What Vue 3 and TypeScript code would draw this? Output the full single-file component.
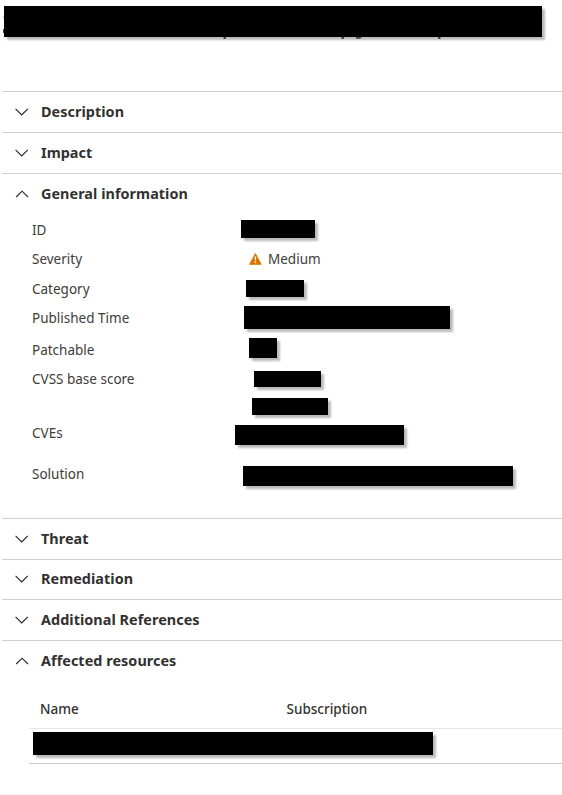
<script setup lang="ts">
interface Bar { w: number; h: number; x: number; y: number }
interface Field { label: string; height: number; bars: Bar[]; severity?: string }

const fields: Field[] = [
  { label: 'ID', height: 29, bars: [{ x: 241, y: 2, w: 74, h: 18 }] },
  { label: 'Severity', height: 30, bars: [], severity: 'Medium' },
  { label: 'Category', height: 29, bars: [{ x: 246, y: 3, w: 58, h: 17 }] },
  { label: 'Published Time', height: 32, bars: [{ x: 244, y: 0, w: 206, h: 23 }] },
  { label: 'Patchable', height: 29, bars: [{ x: 249, y: 0, w: 28, h: 20 }] },
  { label: 'CVSS base score', height: 54, bars: [{ x: 254, y: 4, w: 67, h: 16 }, { x: 252, y: 11, w: 76, h: 17 }] },
  { label: 'CVEs', height: 41, bars: [{ x: 235, y: 4, w: 169, h: 20 }] },
  { label: 'Solution', height: 54, bars: [{ x: 243, y: 4, w: 270, h: 20 }] },
]

const sections = [
  { title: 'Description', open: false, cls: '' },
  { title: 'Impact', open: false, cls: '' },
  { title: 'General information', open: true, cls: 'general' },
  { title: 'Threat', open: false, cls: '' },
  { title: 'Remediation', open: false, cls: 'short' },
  { title: 'Additional References', open: false, cls: '' },
  { title: 'Affected resources', open: true, cls: 'resources' },
]
</script>

<template>
  <main class="panel">
    <header class="title">
      <svg class="traces" width="562" height="50" viewBox="0 0 562 50" aria-hidden="true">
        <path d="M3 16h1v3h-1z" fill="#e8c9a5" />
        <path d="M3 29h1v4h-1z" fill="#4c4038" />
      </svg>
      <div class="redacted title-bar"></div>
      <svg class="traces" width="562" height="50" viewBox="0 0 562 50" aria-hidden="true">
        <path d="M223.5 37h2.5v2h-2.5zM341.5 37h2.5v2h-2.5zM356 37h6l-2 1.7h-4zM438 37h2.5v2H438z" fill="#444" />
      </svg>
    </header>

    <section v-for="s in sections" :key="s.title" class="section" :class="s.cls">
      <h2 class="section-head">
        <svg class="chevron" width="14" height="8" viewBox="0 0 14 8" fill="none" stroke="#252423" stroke-width="1.1">
          <path :d="s.open ? 'M1.2 7 7.1 1.2 13 7' : 'M.6 .8 6.7 7l6.1-6.2'" />
        </svg>
        <span>{{ s.title }}</span>
      </h2>

      <div v-if="s.cls === 'general'" class="fields">
        <div v-for="f in fields" :key="f.label" class="field" :style="{ height: f.height + 'px' }">
          <span class="label">{{ f.label }}</span>
          <div class="value">
            <span v-if="f.severity" class="severity">
              <svg width="14" height="12" viewBox="0 0 14 12">
                <path d="M7.4 .6 13.2 11.3H1.6Z" fill="#db7500" stroke="#db7500" stroke-width=".9" stroke-linejoin="round" />
                <path d="M6.6 3.5h1.6l-.3 4h-1zM6.7 8.5h1.4v1.4H6.7z" fill="#fff" />
              </svg>
              <span>{{ f.severity }}</span>
            </span>
            <div
              v-for="(b, i) in f.bars"
              :key="i"
              class="redacted"
              :style="{ width: b.w + 'px', height: b.h + 'px', marginLeft: b.x - 232 + 'px', marginTop: b.y + 'px' }"
            ></div>
          </div>
        </div>
      </div>

      <div v-if="s.cls === 'resources'" class="table">
        <div class="thead">
          <span>Name</span>
          <span>Subscription</span>
        </div>
        <div class="trow"><div class="redacted row-bar"></div></div>
      </div>
    </section>
    <div class="footer-line"></div>
  </main>
</template>

<style>
body {
  background: #fff;
  overflow: hidden;
}
</style>

<style scoped>
.panel {
  width: 562px;
  height: 795px;
  box-sizing: border-box;
  overflow: hidden;
  display: flex;
  flex-direction: column;
  background: #fff;
  color: #323130;
  font-family: "Segoe UI", "Noto Sans", sans-serif;
}
.title {
  position: relative;
  height: 91px;
  flex: none;
  box-sizing: border-box;
  padding: 6px 0 0 4px;
}
.title-bar {
  width: 538px;
  height: 31px;
}
.traces {
  position: absolute;
  left: 0;
  top: 0;
}
.redacted {
  background: #000;
  box-shadow: 3px 3px 2px rgba(0, 0, 0, 0.27);
}
.section {
  flex: none;
  height: 41px;
  box-sizing: border-box;
  margin-left: 2px;
  border-top: 1px solid #d2d2d2;
}
.short {
  height: 40px;
}
.general {
  height: 345px;
}
.resources {
  height: 154px;
}
.section-head {
  display: flex;
  align-items: center;
  height: 40px;
  margin: 0;
  padding-left: 13px;
  gap: 12px;
  font-size: 14.4px;
  line-height: 20px;
  font-weight: 700;
  letter-spacing: 0.05px;
  white-space: nowrap;
}
.short .section-head {
  height: 38px;
}
.chevron {
  flex: none;
}
.fields {
  padding: 4px 0 0 30px;
  color: #3d3c3b;
}
.field {
  display: grid;
  grid-template-columns: 200px 1fr;
}
.label {
  padding-top: 2px;
  font-size: 13.5px;
  line-height: 20px;
  white-space: nowrap;
}
.severity {
  display: flex;
  align-items: center;
  gap: 6px;
  padding: 2px 0 0 16px;
  font-size: 13.5px;
  line-height: 20px;
}
.table {
  margin-left: 27px;
}
.thead {
  display: grid;
  grid-template-columns: 246.5px 1fr;
  height: 48px;
  box-sizing: border-box;
  padding: 18px 0 0 11px;
  border-bottom: 1px solid #e6e6e6;
  font-size: 13.5px;
  line-height: 20px;
  font-weight: 500;
}
.trow {
  height: 35px;
  box-sizing: border-box;
  padding: 3px 0 0 4px;
  border-bottom: 1px solid #c8c8c8;
}
.row-bar {
  width: 400px;
  height: 23px;
}
.footer-line {
  height: 1px;
  background: #fafafa;
}
</style>
